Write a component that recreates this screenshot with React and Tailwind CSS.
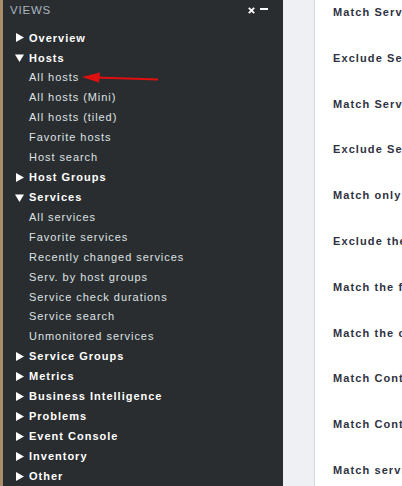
import React from 'react';

const menu = [
    { label: 'Overview', open: false },
    { label: 'Hosts', open: true, items: ['All hosts', 'All hosts (Mini)', 'All hosts (tiled)', 'Favorite hosts', 'Host search'] },
    { label: 'Host Groups', open: false },
    {
        label: 'Services', open: true, items: [
            'All services', 'Favorite services', 'Recently changed services', 'Serv. by host groups',
            'Service check durations', 'Service search', 'Unmonitored services',
        ],
    },
    { label: 'Service Groups', open: false },
    { label: 'Metrics', open: false },
    { label: 'Business Intelligence', open: false },
    { label: 'Problems', open: false },
    { label: 'Event Console', open: false },
    { label: 'Inventory', open: false },
    { label: 'Other', open: false },
];

const rules = [
    'Match Service groups',
    'Exclude Service groups',
    'Match Service groups (regex)',
    'Exclude Service groups (regex)',
    'Match only during timeperiod',
    'Exclude the following hosts',
    'Match the following hosts',
    'Match the contact groups',
    'Match Contact groups',
    'Match Contacts',
    'Match services',
];

const Triangle = ({ open }) => (
    <svg width="9" height="9" viewBox="0 0 9 9" className="shrink-0">
        {open ? <polygon points="0,1.5 9,1.5 4.5,9" fill="#ffffff" /> : <polygon points="1,0 9,4.5 1,9" fill="#ffffff" />}
    </svg>
);

const Group = ({ group }) => (
    <>
        <div className="h-5 flex items-center pl-[12px] gap-[5px]">
            <Triangle open={group.open} />
            <span className="text-[11px] font-bold text-white tracking-[1px]">{group.label}</span>
        </div>
        {group.open && group.items.map((item) => (
            <div key={item} className="h-5 flex items-center pl-[26px]">
                <span className="text-[11px] text-[#dde2e5] tracking-[0.95px]">{item}</span>
            </div>
        ))}
    </>
);

export default function App() {
    return (
        <div className="w-[402px] h-[486px] flex overflow-hidden bg-white" style={{ fontFamily: '"Liberation Sans", Arial, sans-serif' }}>
            {/* Sidebar */}
            <div className="relative w-[283px] shrink-0 h-full flex bg-[#2a2d2f]">
                <div className="w-[3px] h-full bg-[#a88e6a]" />
                <div className="flex-1 flex flex-col">
                    <div className="h-[21px] flex items-center justify-between pl-[7px] pr-[15px]">
                        <span className="text-[11.5px] text-[#a9b5c0] tracking-[0.8px]">VIEWS</span>
                        <div className="flex items-center gap-[5px]">
                            <svg width="7" height="7" viewBox="0 0 7 7">
                                <path d="M0.8 0.8 L6.2 6.2 M6.2 0.8 L0.8 6.2" stroke="#ffffff" strokeWidth="1.8" />
                            </svg>
                            <div className="w-[8px] h-[2px] bg-white -mt-[3px]" />
                        </div>
                    </div>
                    <div className="h-[7px]" />
                    {menu.map((g) => <Group key={g.label} group={g} />)}
                </div>

                {/* red pointer arrow */}
                <svg className="absolute left-[80px] top-[70px]" width="82" height="16" viewBox="0 0 82 16">
                    <line x1="16" y1="7.5" x2="78" y2="9.5" stroke="#e01010" strokeWidth="2" />
                    <polygon points="2,7 20,2.5 19,12.5" fill="#e01010" />
                </svg>
            </div>

            {/* gutter */}
            <div className="w-[32px] shrink-0 h-full bg-[#eef0f4] border-r border-[#d4d6de]" />

            {/* content */}
            <div className="flex-1 min-w-0 flex flex-col -mt-[1px]">
                {rules.map((r) => (
                    <div key={r} className="h-[45.8px] shrink-0 pl-[18px] whitespace-nowrap overflow-hidden">
                        <span className="text-[11px] font-bold text-[#2f3242] tracking-[1.1px]">{r}</span>
                    </div>
                ))}
            </div>
        </div>
    );
}
